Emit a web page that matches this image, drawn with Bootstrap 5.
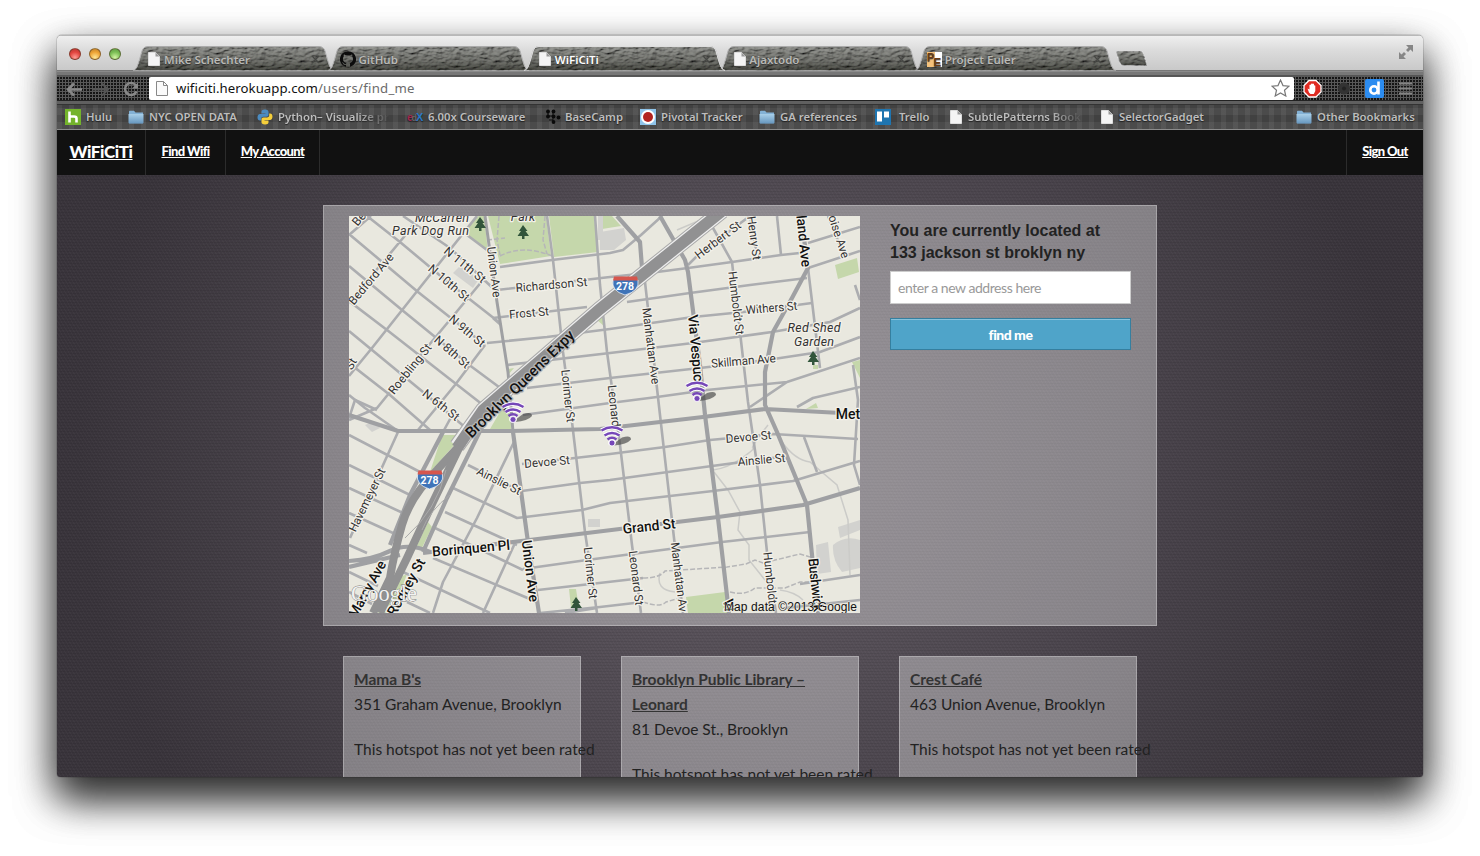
<!DOCTYPE html>
<html lang="en">
<head>
<meta charset="utf-8">
<title>WiFiCiTi</title>
<link href="https://cdn.jsdelivr.net/npm/bootstrap@5.3.0/dist/css/bootstrap.min.css" rel="stylesheet">
<style>
body{background:#fff;height:856px;overflow:hidden;padding:35px 57px 0;font-family:"Lato","Roboto",sans-serif}
.win{width:1366px;height:742px;border-radius:5px 5px 3px 3px;overflow:hidden;box-shadow:0 20px 40px rgba(0,0,0,.6),0 0 1px rgba(0,0,0,.5)}
.shade{height:742px;border-radius:5px;box-shadow:0 20px 40px rgba(0,0,0,.6),0 0 1px rgba(0,0,0,.6)}
.titlebar{height:36px;background:linear-gradient(#efefef,#dcdcdc 40%,#c9c9c9);border-top:1px solid #b8b8b8;border-bottom:1px solid #777;position:relative}
.light{width:12px;height:12px;border-radius:50%;border:1px solid rgba(70,50,30,.55);margin-right:8px}
.red{background:radial-gradient(circle at 50% 85%,#ff9c94,#e2453f 55%,#b03530)}
.amber{background:radial-gradient(circle at 50% 85%,#ffe796,#eea436 55%,#b97c28)}
.green{background:radial-gradient(circle at 50% 85%,#d4f5a4,#7cbf55 55%,#5a9440)}
.tabx{width:201px;height:25px;margin-right:-5.6px;position:relative;font:600 11.5px "Noto Sans",sans-serif;color:#b9b9b6}
.tabx>svg.shape{position:absolute;inset:0}
.tabx .tl{position:relative;display:flex;align-items:center;height:25px;padding-left:15px;padding-top:1px;text-shadow:0 1px 1px #333}
.tabx .tl span{margin-left:4px;line-height:15px}
.tabx .x{position:absolute;right:14px;top:9px}
.tools{height:29px;padding-top:5px;background:linear-gradient(#8a8a8a 0 1px,#777 1px 4px,#333 5px,transparent 5px),radial-gradient(circle at 1px 1px,#151515 .8px,transparent 1.1px) 0 0/3px 3px,#585858}
.omni{width:1145px;height:23px;background:#fff;border-radius:2px;margin-left:8px;font:13.2px "Noto Sans",sans-serif;color:#111;letter-spacing:.05px}
.omni i{font-style:normal;color:#6b6b6b;letter-spacing:.25px}
.marks{height:30px;border-top:1px solid #222;border-bottom:1px solid #8c8c8c;background:linear-gradient(#606060 0 3px,#333 3px 4px,transparent 4px),repeating-linear-gradient(90deg,rgba(255,255,255,.06) 0 5px,transparent 5px 12px),repeating-linear-gradient(0deg,#4b4b4b 0 7px,#414141 7px 14px);font:600 11.3px "Noto Sans",sans-serif;color:#bdbdbd;text-shadow:0 1px 1px #222;position:relative;padding-top:3px}
.bm{height:24px;white-space:nowrap;overflow:hidden;flex:none}
.bm svg{flex:none}
.fade-end{-webkit-mask-image:linear-gradient(90deg,#000 75%,transparent);mask-image:linear-gradient(90deg,#000 75%,transparent)}
.sitebar{height:45px;background:#111;font-weight:900;font-size:13px}
.sitebar a{color:#fff;display:flex;align-items:center;height:45px;border-right:1px solid #2c2c2c;white-space:nowrap;justify-content:center;padding-bottom:1px;letter-spacing:-.62px}
.sitebar .brandx{width:89px;font-size:17px;letter-spacing:-.4px}
.page{height:602px;padding:30px 266px 0;background:repeating-linear-gradient(0deg,rgba(0,0,0,.07) 0 1px,transparent 1px 3px),repeating-linear-gradient(60deg,rgba(255,255,255,.025) 0 1px,transparent 1px 3px),radial-gradient(ellipse 660px 620px at 50% 48%,#625b63,#4c464e 55%,#39343b)}
.glass{background:rgba(255,255,255,.35);border:1px solid rgba(255,255,255,.28)}
.panel{height:421px;padding:10px 25px}
.where{width:241px;margin-left:30px;color:#222}
.where h1{font:bold 16px/22px "Liberation Sans",sans-serif;margin:4px 0 7px;letter-spacing:.02px;white-space:nowrap}
.where input{height:33px;border-radius:0;border:1px solid #ccc;font:14px "Lato",sans-serif;padding:0 7px;letter-spacing:-.45px;color:#888}
.where input::placeholder{color:#999}
.where button{height:32px;margin-top:14px;border-radius:0;background:#4fa4c9;border:1px solid #357f9f;box-shadow:inset 0 1px 0 #86c2dc;color:#fff;font:900 14px "Lato",sans-serif;letter-spacing:-.5px;padding:0}
.spots{gap:40px;padding:0 20px;margin-top:30px}
.spot{width:238px;height:160px;padding:10px;font-size:15.5px;line-height:25px;color:#222;white-space:nowrap}
.spot a{color:#333;font-weight:bold}
.spot p{margin:0 0 20px}
.spot span{display:inline-block;transform-origin:0 50%}
.lbl{font-family:Roboto,sans-serif;fill:#333;stroke:#f3f1ea;stroke-width:2.6px;paint-order:stroke;stroke-linejoin:round;text-anchor:middle;dominant-baseline:central;font-size:12px}
.lbl .big{font-size:14px;fill:#111;font-weight:500}
.lbl .it{font-style:italic;font-size:12.5px}
</style>
<script src="https://cdn.jsdelivr.net/npm/bootstrap@5.3.0/dist/js/bootstrap.bundle.min.js"></script>
</head>
<body>
<svg width="0" height="0" class="position-absolute">
<defs>
<linearGradient id="tg" x2="0" y2="1"><stop offset="0" stop-color="#8c8d89"/><stop offset=".6" stop-color="#6c6d68"/><stop offset="1" stop-color="#44453f"/></linearGradient>
<filter id="leather" x="0" y="0" width="1" height="1"><feTurbulence type="fractalNoise" baseFrequency=".16 .38" numOctaves="3" seed="4" result="n"/><feDiffuseLighting in="n" surfaceScale="2.4" lighting-color="#fff" result="l"><feDistantLight azimuth="235" elevation="50"/></feDiffuseLighting><feBlend in="SourceGraphic" in2="l" mode="multiply" result="b"/><feComponentTransfer in="b" result="c"><feFuncR type="linear" slope="1.25"/><feFuncG type="linear" slope="1.25"/><feFuncB type="linear" slope="1.25"/></feComponentTransfer><feComposite in="c" in2="SourceGraphic" operator="in"/></filter>
<linearGradient id="fg" x2="0" y2="1"><stop stop-color="#a9cfe9"/><stop offset="1" stop-color="#6797bf"/></linearGradient>
<symbol id="tab" viewBox="0 0 201 25"><path d="M0 24.500C4 23.500 5 19 9 5Q10.500 .5 15 .5H186Q190.500 .5 192 5C196 19 197 23.500 201 24.500Z" fill="url(#tg)" filter="url(#leather)"/><path d="M0 24.500C4 23.500 5 19 9 5Q10.500 .5 15 .5H186Q190.500 .5 192 5C196 19 197 23.500 201 24.500" fill="none" stroke="#aaa"/></symbol>
<symbol id="doc" viewBox="0 0 12 14"><path d="M.5.5H7.500L11.500 4.500V13.500H.5Z" fill="#f4f4f4" stroke="#ddd"/><path d="M7.500.5V4.500H11.500Z" fill="#999"/></symbol>
<symbol id="folder" viewBox="0 0 16 14"><path d="M1 3V1.500Q1 .7 2 .7H6L7.500 2.500H15V13.300H1Z" fill="#83b1d5"/><path d="M.5 4H15.500V12.500Q15.500 13.400 14.500 13.400H1.500Q.5 13.400.5 12.500Z" fill="url(#fg)"/></symbol>
<symbol id="cross" viewBox="0 0 9 9"><path d="M1 1L8 8M8 1L1 8" stroke="#454643" stroke-width="1.3"/></symbol>
</defs>
</svg>
<div class="shade">
<div class="win">
 <header class="titlebar d-flex">
  <div class="d-flex" style="padding:12px 0 0 12px;width:76px"><i class="light red"></i><i class="light amber"></i><i class="light green"></i></div>
  <nav class="d-flex" style="padding-top:10px">
   <div class="tabx"><svg class="shape" width="201" height="25"><use href="#tab"/></svg><div class="tl"><svg width="12" height="14"><use href="#doc"/></svg><span>Mike Schechter</span></div><svg class="x" width="9" height="9"><use href="#cross"/></svg></div>
   <div class="tabx"><svg class="shape" width="201" height="25"><use href="#tab"/></svg><div class="tl" style="padding-left:12px"><svg width="16" height="16" viewBox="0 0 16 16"><path d="M8 .2A8 8 0 0 0 5.400 15.800C5.800 15.900 6 15.600 6 15.400V14C3.800 14.500 3.300 13 3.300 13 2.900 12.100 2.400 11.800 2.400 11.800 1.700 11.300 2.500 11.300 2.500 11.300 3.300 11.400 3.700 12.100 3.700 12.100 4.400 13.400 5.600 13 6 12.800 6.100 12.300 6.300 11.900 6.600 11.700 4.800 11.500 3 10.800 3 7.700 3 6.800 3.300 6.100 3.800 5.600 3.700 5.400 3.500 4.600 3.900 3.500 3.900 3.500 4.500 3.300 6 4.300A7.600 7.600 0 0 1 10 4.300C11.500 3.300 12.100 3.500 12.100 3.500 12.500 4.600 12.300 5.400 12.200 5.600 12.700 6.100 13 6.800 13 7.700 13 10.800 11.200 11.500 9.400 11.700 9.800 12 10 12.500 10 13.200V15.400C10 15.600 10.200 15.900 10.600 15.800A8 8 0 0 0 8 .2Z" fill="#0c0c0c"/></svg><span style="margin-left:2px">GitHub</span></div><svg class="x" width="9" height="9"><use href="#cross"/></svg></div>
   <div class="tabx text-white" style="z-index:2"><svg class="shape" width="201" height="25"><use href="#tab"/><path d="M0 24.500C4 23.500 5 19 9 5Q10.500 .5 15 .5H186Q190.500 .5 192 5C196 19 197 23.500 201 24.500" fill="none" stroke="#ddd"/></svg><div class="tl"><svg width="12" height="14"><use href="#doc"/></svg><span>WiFiCiTi</span></div><svg class="x" width="9" height="9"><use href="#cross"/></svg></div>
   <div class="tabx"><svg class="shape" width="201" height="25"><use href="#tab"/></svg><div class="tl"><svg width="12" height="14"><use href="#doc"/></svg><span style="margin-left:3px">Ajaxtodo</span></div><svg class="x" width="9" height="9"><use href="#cross"/></svg></div>
   <div class="tabx"><svg class="shape" width="201" height="25"><use href="#tab"/></svg><div class="tl" style="padding-left:12px"><svg width="15" height="15" viewBox="0 0 15 15"><path d="M0 0H15V15H0Z" fill="#fff"/><path d="M0 0H8V15H0Z" fill="#f5c27c"/><text x="0" y="9" font-family="Liberation Sans" font-weight="bold" font-size="11" fill="#6b3d14">P</text><text x="6.500" y="14" font-family="Liberation Sans" font-weight="bold" font-size="11.500" fill="#6b3d14">E</text></svg><span style="margin-left:3px">Project Euler</span></div><svg class="x" width="9" height="9"><use href="#cross"/></svg></div>
   <svg width="34" height="17" viewBox="0 0 34 17" style="margin:4px 0 0 5px"><path d="M3 1H25Q27 1 28 3L32 15.500H9Q6 15.500 5 13L1.500 3Q1 1 3 1Z" fill="url(#tg)" filter="url(#leather)" stroke="#aaa"/></svg>
  </nav>
  <svg class="ms-auto" width="14" height="14" viewBox="0 0 14 14" style="margin:9px 10px 0 0"><path d="M7 0H14V7L11.500 4.500 9 7 7 5 9.500 2.500ZM0 7L2.500 9.500 5 7 7 9 4.500 11.500 7 14H0Z" fill="#868686"/></svg>
 </header>
 <div class="tools d-flex align-items-center">
  <svg width="84" height="23" viewBox="0 0 84 23" fill="none" stroke="#888" stroke-width="2.600"><path d="M25 12.500H12M17 6.500L11 12.500 17 18.500"/><path d="M36 12.500H50M45 6.500L51 12.500 45 18.500" stroke="#555" stroke-width="2"/><path d="M79 8.500A6 6 0 1 0 79.500 14.500"/><path d="M75 11.500H81V5.500Z" fill="#888" stroke="none"/></svg>
  <div class="omni d-flex align-items-center">
   <svg width="12" height="15" viewBox="0 0 12 15" style="margin:0 8px 0 7px"><path d="M.5.5H7.500L11.500 4.500V14.500H.5ZM7.500.5V4.500H11.500" fill="#fafafa" stroke="#888"/></svg>
   <span>wificiti.herokuapp.com<i>/users/find_me</i></span>
   <svg class="ms-auto" width="19" height="18" viewBox="0 0 19 18" style="margin-right:4px"><path d="M9.500 1L12 6.600 18 7.200 13.500 11.200 14.800 17 9.500 14 4.200 17 5.500 11.200 1 7.200 7 6.600Z" fill="#fff" stroke="#777" stroke-width="1.200"/></svg>
  </div>
  <svg width="129" height="23" viewBox="0 0 129 23"><path d="M15 3.500H22L27 8.500V15L22 20H15L10 15V8.500Z" fill="#e02b22" stroke="#fff" stroke-width="1.300"/><path d="M15 15.500L13.500 11.500 15.500 12.500V8Q16.300 7 17 8V7Q17.800 6 18.500 7V6.800Q19.300 6.300 20 7.200V8.500Q20.800 7.800 21.300 8.800V14L19.800 17H16.500Z" fill="#fff"/><circle cx="50" cy="11.500" r="6" fill="#333"/><circle cx="50" cy="11.500" r="2" fill="#222"/><rect x="71" y="2" width="19" height="19" rx="2" fill="#2c8cf0"/><circle cx="80" cy="13" r="3.700" fill="none" stroke="#fff" stroke-width="2.600"/><path d="M84.500 4.500V17.500" stroke="#fff" stroke-width="2.600"/><path d="M105 6.500H118M105 11.500H118M105 16.500H118" stroke="#858585" stroke-width="2"/></svg>
 </div>
 <div class="marks d-flex align-items-center">
  <div class="bm d-flex align-items-center" style="margin-left:8px;width:63px"><svg class="me-2" style="margin-right:5px!important" width="16" height="16"><path d="M0 0H16V16H0Z" fill="#73b32b"/><path d="M4.500 2.500V13.500M4.500 8.500Q4.500 7.500 6 7.500H9Q11.500 7.500 11.500 9.500V13.500" stroke="#fff" stroke-width="2.600" fill="none"/></svg>Hulu</div>
  <div class="bm d-flex align-items-center" style="width:129px"><svg width="16" height="14" style="margin-right:5px"><use href="#folder"/></svg>NYC OPEN DATA</div>
  <div class="bm d-flex align-items-center fade-end" style="width:133px"><svg width="16" height="16" viewBox="0 0 16 16" style="margin-right:5px"><path d="M8 .5C5 .5 4.500 1.600 4.500 3V4.500H8.500V5H3C1.500 5 .5 6.500.5 8.500S1.500 11.500 3 11.500H4.200V9.800C4.200 8.500 5 7.800 6.500 7.800H9.500C10.800 7.800 11.500 7 11.500 5.800V3C11.500 1.500 10.500.5 8 .5Z" fill="#4b8bc0"/><path d="M8 15.500C11 15.500 11.500 14.400 11.500 13V11.500H7.500V11H13C14.500 11 15.500 9.500 15.500 7.500S14.500 4.500 13 4.500H12.200V6.200C12.200 7.500 11.400 8.400 9.900 8.400H6.500C5.200 8.400 4.500 9.200 4.500 10.400V13C4.500 14.500 5.500 15.500 8 15.500Z" fill="#f5cf3b"/></svg>Python– Visualize pro</div>
  <div class="bm d-flex align-items-center" style="width:138px;margin-left:17px"><svg width="18" height="14" style="margin-right:3px" font-family="Liberation Sans" font-weight="bold"><text x="0" y="10.500" font-size="11" fill="#a0264c">e</text><text x="4.500" y="10.500" font-size="9" fill="#666">d</text><text x="9" y="11" font-size="11" fill="#2979c8">X</text></svg>6.00x Courseware</div>
  <div class="bm d-flex align-items-center" style="width:95px"><svg width="16" height="16" style="margin-right:4px" fill="#0a0a0a"><path d="M3 2V7H8M8 2V14M8 11H4" stroke="#0a0a0a" fill="none"/><circle cx="3" cy="2.500" r="1.900"/><circle cx="8.500" cy="2.500" r="1.900"/><circle cx="3" cy="7.500" r="1.900"/><circle cx="8.500" cy="7.500" r="1.900"/><circle cx="8.500" cy="13" r="1.900"/><circle cx="13.500" cy="8.500" r="1.900"/></svg>BaseCamp</div>
  <div class="bm d-flex align-items-center" style="width:119px"><svg width="16" height="16" style="margin-right:5px"><path d="M0 0H16V16H0Z" fill="#8fc4ea"/><circle cx="8" cy="8" r="7" fill="#fff"/><circle cx="8" cy="8" r="5" fill="#b32420"/></svg>Pivotal Tracker</div>
  <div class="bm d-flex align-items-center" style="width:116px"><svg width="16" height="14" style="margin-right:5px"><use href="#folder"/></svg>GA references</div>
  <div class="bm d-flex align-items-center" style="width:75px"><svg width="16" height="16" style="margin-right:8px"><path d="M0 0H16V16H0Z" fill="#1f75b0"/><path d="M2 2.500H7V12.500H2ZM9 2.500H14V8.500H9Z" fill="#fff"/></svg>Trello</div>
  <div class="bm d-flex align-items-center fade-end" style="width:133px"><svg width="12" height="14" style="margin-right:6px"><use href="#doc"/></svg>SubtlePatterns Bookm</div>
  <div class="bm d-flex align-items-center" style="width:110px;margin-left:18px"><svg width="12" height="14" style="margin-right:6px"><use href="#doc"/></svg>SelectorGadget</div>
  <div class="bm d-flex align-items-center ms-auto" style="width:127px"><svg width="16" height="14" style="margin-right:5px"><use href="#folder"/></svg>Other Bookmarks</div>
 </div>
 <nav class="sitebar d-flex">
  <a class="brandx" href="#">WiFiCiTi</a><a href="#" style="width:80px">Find Wifi</a><a href="#" style="width:94px">My Account</a>
  <a class="ms-auto border-end-0" href="#" style="width:77px;border-left:1px solid #2c2c2c">Sign Out</a>
 </nav>
 <main class="page">
  <section class="glass panel d-flex">
   <svg width="511" height="397" viewBox="349 216 511 397" class="flex-shrink-0 d-block">
    <rect x="349" y="216" width="511" height="397" fill="#e9e8df"/>
    <g fill="#c5d7ab"><path d="M463 232L478 216 484 216 488 252ZM488 216H546L551 256 500 264ZM549 216H594L598 252 554 257ZM602 216H612L621 226 602 229ZM835 265L857 258 859 272 838 279ZM442 435H463L448 452 430 472ZM490 429L511 429 511 410 504 405ZM686 597L725 592 729 613H688ZM428 522L432 527 422 548 416 548ZM398 578L407 574 393 613H378ZM569 589H576L579 608 571 608ZM852 362L860 360V378ZM806 409L816 403 818 408ZM813 365H818V369H813ZM597 320L604 315 604 326ZM508 369L514 368 508 375Z"/></g>
    <g fill="#d2d2cf"><path d="M600 232L624 228 626 240 614 250H600ZM453 273L460 266 479 279 473 288ZM598 216H603V240H598ZM365 425L374 421 380 428 372 432ZM588 519H600V527H588ZM816 545L828 542 831 572 817 574ZM838 527L860 520V530L840 538ZM833 545Q845 535 860 540V568L842 572Q832 560 833 545Z"/></g>
    <g fill="none" stroke="#cbcbc8" stroke-width="1.500"><path d="M713 470Q728 468 742 458T753 448 768 425M714 472L728 490 740 512 738 530 749 545V560L765 580M782 442Q795 460 810 462L837 485 848 520 850 575M660 573Q655 590 675 592M780 590Q795 592 803 600M677 230L710 216M682 250Q700 240 710 228"/><path stroke="#b6b6b8" stroke-dasharray="5 2" d="M643 578Q660 578 665 571L727 567 746 564 755 560 763 563 800 554 810 557M643 602Q660 608 666 602L683 597M730 592Q745 596 755 588L785 588 800 582 815 582M499 216L497 240 500 255M545 216L543 240 547 254M487 240L505 238M500 256Q523 244 552 256"/></g>
    <g fill="none" stroke="#acadb0" stroke-width="2.600" stroke-linejoin="round">
     <path d="M547 216L553 260 563 352 570 405 585 532 597 613M595 216L600 285 607 352 620 445 632 545 641 613M642 268L645 282 660 415 674 538 683 613M713 228L732 262 748 402 760 485 767 552 776 613M808 268L820 368M777 216L781 255M750 216L757 255M828 216L845 258M853 365L858 400 854 465 860 485M804 437L817 472M855 285L860 300"/>
     <path d="M500 267L552 260 610 253 623 250 641 235 662 216M497 290L610 277 657 272 688 268 732 262 781 255 800 253M493 318L587 307M627 302L690 293 750 285 807 278M487 343L547 337 610 329 693 317 743 312 797 305 812 303M507 365L610 353 693 343 772 332 830 322 860 308M527 388L610 378 700 368 767 360 820 352 860 337M523 415L610 403 657 397 707 390 787 382 860 358M750 407L787 382M797 407L813 398 860 387M808 268L860 251M808 243L860 227M688 265L700 253 750 216"/>
     <path d="M522 464L610 454 665 447 710 440 773 434 858 439M522 491L580 483 610 480 668 472 712 466 780 457M453 488L517 518 582 510 610 503 670 496 713 491 793 481 853 463 860 461M523 569L587 560 722 542 810 532M538 590L643 578M540 613L600 607 643 602M800 584L860 575M565 613L597 608M785 608L860 600"/>
     <path d="M367 216L400 242 449 283 500 323M349 234L418 292 485 345M349 266L402 310 472 367 503 390M349 301L387 330 483 405M349 331L423 392 466 428M349 363L390 395 430 430M349 395L365 408 398 431M403 216L450 248 497 292M463 232L487 250M349 235L371 216M349 303L403 238 420 216M477 216L418 290 372 348 349 376M483 280L390 392 377 408 349 420M485 345L455 385 418 430M501 325L493 318M443 432L455 410"/>
     <path d="M398 432L350 538M349 435L420 472M349 465L410 495M349 488L403 513M349 513L393 533M349 545L367 553M514 442L477 518 443 582 433 613M515 543L483 613M468 465L522 492M445 512L517 545M435 528L523 570M433 558L537 602M403 572L490 613M407 602L430 613M349 572L378 586M349 592L372 604M349 418L355 400 377 410"/>
    </g>
    <g fill="none" stroke="#9fa0a3" stroke-width="4.200" stroke-linejoin="round">
     <path d="M485 216L497 302 508 372 513 432" stroke-width="3"/>
     <path d="M513 432L527 535 539 613M617 216L640 242 642 268M660 216L685 260 688 272 700 365 705 415 718 518 729 613"/>
     <path d="M349 415L398 431 510 431 600 429 703 417 765 409 860 414M801 216L808 268 792 298 773 332 765 372 765 405 777 432 807 505 812 555 818 613M423 553L513 542 587 533 718 517 803 505 860 488"/>
     <path d="M349 561Q372 560 390 551T430 552M349 567L400 555M443 432L410 495 390 545M483 425L447 498 423 552"/>
    </g>
    <path d="M722 211L600 309 483 410 457 446" fill="none" stroke="#aaa" stroke-width="16"/><path d="M722 211L600 309 483 410 457 446" fill="none" stroke="#eee" stroke-width="14"/><path d="M722 211L600 309 483 410 457 448" fill="none" stroke="#919192" stroke-width="11.500"/>
    <g fill="none" stroke="#919192" stroke-width="8"><path d="M463 442L437 470Q410 497 402 525T390 578L373 613"/><path d="M460 446L433 502 407 558 380 613"/><path d="M446 470Q437 510 405 538M450 495Q430 510 422 530" stroke="#aaa" stroke-width="1"/></g>
    <g class="lbl">
     <text transform="translate(371 279) rotate(-50)" textLength="63">Bedford Ave</text>
     <text transform="translate(359 219) rotate(-50)">Be</text>
     <text class="it" x="442" y="217" textLength="54">McCarren</text><text class="it" x="430.500" y="230.500" textLength="77">Park Dog Run</text><text class="it" x="523" y="216">Park</text>
     <text transform="translate(465 265) rotate(39)" textLength="50">N 11th St</text><text transform="translate(449 283) rotate(40)" textLength="50">N 10th St</text><text transform="translate(467 331) rotate(40)" textLength="43">N 9th St</text><text transform="translate(452 352) rotate(41)" textLength="43">N 8th St</text><text transform="translate(441 405) rotate(38)" textLength="43">N 6th St</text>
     <text transform="translate(410 369) rotate(-51)" textLength="61">Roebling St</text><text transform="translate(494 272) rotate(83)" textLength="51">Union Ave</text>
     <text transform="translate(551.500 285) rotate(-5)" textLength="72">Richardson St</text><text transform="translate(529 313) rotate(-5)" textLength="40">Frost St</text>
     <text class="big" transform="translate(520 384) rotate(-44.500)" textLength="146" style="font-size:15px;stroke:#b5b5b5">Brooklyn Queens Expy</text>
     <text transform="translate(568 396) rotate(84)" textLength="53">Lorimer St</text><text transform="translate(614 406) rotate(84)" textLength="42">Leonard</text><text transform="translate(651 346) rotate(83)" textLength="77">Manhattan Ave</text>
     <text transform="translate(718 240) rotate(-37)" textLength="54">Herbert St</text><text transform="translate(754 238) rotate(82)" textLength="44">Henry St</text><text class="big" transform="translate(804 241) rotate(84)" textLength="52">land Ave</text><text transform="translate(838 234) rotate(72)" textLength="50">voise Ave</text>
     <text transform="translate(736 303) rotate(83)" textLength="64">Humboldt St</text><text transform="translate(771.500 308) rotate(-5)" textLength="52">Withers St</text><text class="it" x="814" y="327" textLength="53">Red Shed</text><text class="it" x="814" y="341.500" textLength="40">Garden</text>
     <text transform="translate(743.500 361) rotate(-5)" textLength="65">Skillman Ave</text><text class="big" transform="translate(696 348) rotate(85)" textLength="67">Via Vespuc</text><text class="big" x="848" y="414">Met</text>
     <text transform="translate(748.500 437) rotate(-5)" textLength="46">Devoe St</text><text transform="translate(547 462) rotate(-5)" textLength="46">Devoe St</text><text transform="translate(761.500 460) rotate(-5)" textLength="48">Ainslie St</text><text transform="translate(499 481) rotate(26)" textLength="48">Ainslie St</text>
     <text class="big" transform="translate(649 526) rotate(-6)" textLength="53">Grand St</text><text class="big" transform="translate(471 548) rotate(-5)" textLength="78">Borinquen Pl</text><text class="big" transform="translate(530.500 571) rotate(83)" textLength="62">Union Ave</text>
     <text transform="translate(590.500 573) rotate(84)" textLength="52">Lorimer St</text><text transform="translate(636 578) rotate(83)" textLength="55">Leonard St</text><text transform="translate(679 577) rotate(83)" textLength="70">Manhattan Av</text><text transform="translate(770 578) rotate(84)" textLength="52">Humboldt</text><text class="big" transform="translate(816 585) rotate(84)" textLength="54">Bushwick</text><text class="big" transform="translate(729 605) rotate(84)">Vi</text>
     <text transform="translate(367 500) rotate(-64)" textLength="69">Havemeyer St</text><text class="big" transform="translate(367 589) rotate(-61)" textLength="63">Marcy Ave</text><text class="big" transform="translate(406 587) rotate(-61)" textLength="63">Rodney St</text><text transform="translate(351 364) rotate(-60)">St</text>
    </g>
    <g fill="#32553b"><path id="tr" d="M523 225L519 231H521L517.500 236H522V239H524.500V236H529L525.500 231H527.500Z"/><use href="#tr" x="-43" y="-8"/><use href="#tr" x="290" y="126"/><use href="#tr" x="53" y="372"/></g>
    <g id="sh"><path d="M613 280Q625 275 638 280Q640 291 625 295Q611 291 613 280Z" fill="#3f74b8" stroke="#fff" stroke-width=".7"/><path d="M614 276.500H637L638 280.500H613Z" fill="#d6564d"/><text x="625" y="290" text-anchor="middle" font-family="Roboto" font-weight="bold" font-size="10.500" fill="#fff">278</text></g><use href="#sh" x="-195.500" y="194"/>
    <g id="wf"><path d="M699 399L707 393Q716 390 716 395Q712 400 699 401Z" fill="#444" opacity=".65"/><g fill="none" stroke="#fff" stroke-width="4.600"><path d="M686.500 386Q697 379.500 707.500 386M689.500 391Q697 386 704.500 391"/><circle cx="697" cy="398" r="1.500"/></g><g fill="none" stroke="#7647b8" stroke-width="2.500"><path d="M686.500 386Q697 379.500 707.500 386M689.500 391Q697 386 704.500 391M692.500 395Q697 391.500 701.500 395" /></g><circle cx="697" cy="398.500" r="3" fill="#7647b8" stroke="#fff" stroke-width=".8"/></g><use href="#wf" x="-184" y="21"/><use href="#wf" x="-85" y="44.500"/>
    <text x="351" y="601" textLength="66" lengthAdjust="spacingAndGlyphs" font-family="Liberation Serif" font-size="23" fill="#f2f2f2" stroke="#777" stroke-width=".8" paint-order="stroke">Google</text>
    <text x="724" y="611" textLength="133" font-family="Liberation Sans" font-size="12" fill="#111" stroke="#e9e8df" stroke-width="1" paint-order="stroke">Map data ©2013 Google</text>
   </svg>
   <div class="where">
    <h1>You are currently located at<br>133 jackson st broklyn ny</h1>
    <input class="form-control" placeholder="enter a new address here">
    <button class="btn w-100 d-block">find me</button>
   </div>
  </section>
  <section class="spots d-flex">
   <article class="glass spot"><a href="#">Mama B's</a><p>351 Graham Avenue, Brooklyn</p><p>This hotspot has not yet been rated</p></article>
   <article class="glass spot"><a href="#">Brooklyn Public Library –<br>Leonard</a><p>81 Devoe St., Brooklyn</p><p>This hotspot has not yet been rated</p></article>
   <article class="glass spot"><a href="#">Crest Café</a><p>463 Union Avenue, Brooklyn</p><p>This hotspot has not yet been rated</p></article>
  </section>
 </main>
</div>
</div>
</body>
</html>
